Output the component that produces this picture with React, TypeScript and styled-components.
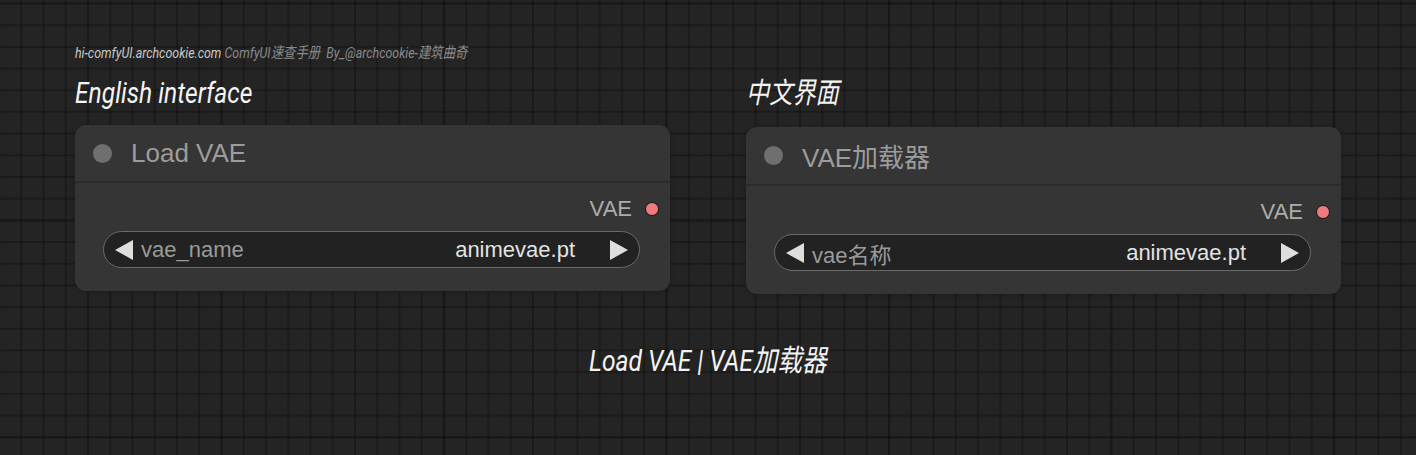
import React from "react";
import styled, { createGlobalStyle } from "styled-components";

const GlobalStyle = createGlobalStyle`
  html, body { margin: 0; padding: 0; background: #222; }
  body { font-family: "Liberation Sans", Arial, sans-serif; }
`;

const Page = styled.div`
  width: 1416px;
  height: 455px;
  overflow: hidden;
  display: flex;
  flex-direction: column;
  background-color: #242424;
  background-image:
    linear-gradient(to right, rgba(0,0,0,0.1) 0 3px, transparent 3px),
    linear-gradient(to bottom, rgba(0,0,0,0.12) 0 3px, transparent 3px),
    linear-gradient(to right, rgba(0,0,0,0.25) 0 2px, transparent 2px),
    linear-gradient(to bottom, rgba(0,0,0,0.25) 0 2px, transparent 2px);
  background-size: 222.5px 217px, 222.5px 217px, 22.25px 21.7px, 22.25px 21.7px;
  background-position: -2.5px 2px, -2.5px 2px, -2px 2.5px, -2px 2.5px;
`;

const Top = styled.div`
  display: flex;
  flex-direction: column;
  padding: 43px 0 0 75px;
`;

const Condensed = styled.span<{ $origin?: string; $scale?: number }>`
  display: inline-block;
  white-space: nowrap;
  font-family: Roboto, "Noto Sans CJK SC", sans-serif;
  font-style: italic;
  transform: scaleX(${(p) => p.$scale ?? 0.8});
  transform-origin: ${(p) => p.$origin ?? "left"} center;
`;

const Credit = styled.div`
  height: 20px;
  line-height: 20px;
  font-size: 15.5px;
  color: #8a8a8a;
`;

const CreditSite = styled.span`
  color: #c9c9c9;
`;

const Columns = styled.div`
  display: flex;
  gap: 76px;
  margin-top: 10px;
`;

const Column = styled.div`
  display: flex;
  flex-direction: column;
  width: 595px;
`;

const Label = styled.div<{ $size?: number }>`
  height: 40px;
  line-height: 40px;
  font-size: ${(p) => p.$size ?? 30}px;
  color: #f4f4f4;
`;

const Node = styled.div<{ $shift?: number }>`
  margin-top: ${(p) => 12 + (p.$shift ?? 0)}px;
  background: #353535;
  border-radius: 11px;
  display: flex;
  flex-direction: column;
  box-shadow: 0 1px 4px rgba(0, 0, 0, 0.25);
`;

const TitleBar = styled.div<{ $h?: number }>`
  height: ${(p) => p.$h ?? 56}px;
  display: flex;
  align-items: center;
  gap: 19px;
  padding-left: 18px;
  border-bottom: 2px solid #2b2b2b;
`;

const StatusDot = styled.span`
  width: 19px;
  height: 19px;
  border-radius: 50%;
  background: #6f6f6f;
`;

const Title = styled.span`
  font-family: "Liberation Sans", "Noto Sans CJK SC", sans-serif;
  font-size: 26px;
  color: #9c9c9c;
`;

const Body = styled.div`
  display: flex;
  flex-direction: column;
  padding: 15px 0 23px;
`;

const OutputRow = styled.div`
  height: 22px;
  display: flex;
  align-items: center;
  justify-content: flex-end;
  gap: 13px;
  padding-right: 11px;
`;

const OutputLabel = styled.span`
  font-size: 22px;
  color: #acacac;
`;

const Socket = styled.span`
  width: 12px;
  height: 12px;
  border-radius: 50%;
  background: #ee7c7c;
  border: 1.5px solid #151515;
`;

const Widget = styled.div`
  margin: 11px 30px 0 28px;
  height: 37px;
  box-sizing: border-box;
  border: 1.5px solid #6a6a6a;
  border-radius: 19px;
  background: #222222;
  display: flex;
  align-items: center;
  padding: 0 11px 0 11px;
`;

const Arrow = styled.span<{ $dir: "left" | "right" }>`
  width: 0;
  height: 0;
  border-top: 10px solid transparent;
  border-bottom: 10px solid transparent;
  ${(p) =>
    p.$dir === "left"
      ? "border-right: 18px solid #dedede;"
      : "border-left: 18px solid #dedede;"}
`;

const WidgetName = styled.span`
  font-family: "Liberation Sans", "Noto Sans CJK SC", sans-serif;
  font-size: 22px;
  color: #9a9a9a;
  margin-left: 8px;
  flex: 1;
`;

const WidgetValue = styled.span`
  font-size: 22px;
  color: #e2e2e2;
  margin-right: 35px;
`;

const Caption = styled.div`
  margin-top: 47px;
  height: 40px;
  line-height: 40px;
  text-align: center;
  font-size: 30px;
  color: #f4f4f4;
`;

type NodeProps = {
  title: string;
  widgetName: string;
  shift?: number;
  titleH?: number;
};

function VaeNode({ title, widgetName, shift, titleH }: NodeProps) {
  return (
    <Node $shift={shift}>
      <TitleBar $h={titleH}>
        <StatusDot />
        <Title>{title}</Title>
      </TitleBar>
      <Body>
        <OutputRow>
          <OutputLabel>VAE</OutputLabel>
          <Socket />
        </OutputRow>
        <Widget>
          <Arrow $dir="left" />
          <WidgetName>{widgetName}</WidgetName>
          <WidgetValue>animevae.pt</WidgetValue>
          <Arrow $dir="right" />
        </Widget>
      </Body>
    </Node>
  );
}

export default function App() {
  return (
    <>
      <GlobalStyle />
      <Page>
        <Top>
          <Credit>
            <Condensed>
              <CreditSite>hi-comfyUI.archcookie.com</CreditSite> ComfyUI速查手册&nbsp; By_@archcookie-建筑曲奇
            </Condensed>
          </Credit>
          <Columns>
            <Column>
              <Label>
                <Condensed $scale={0.82}>English interface</Condensed>
              </Label>
              <VaeNode title="Load VAE" widgetName="vae_name" />
            </Column>
            <Column>
              <Label $size={29}>
                <Condensed $scale={0.8}>中文界面</Condensed>
              </Label>
              <VaeNode title="VAE加载器" widgetName="vae名称" shift={2} titleH={57} />
            </Column>
          </Columns>
        </Top>
        <Caption>
          <Condensed $origin="center" $scale={0.82}>Load VAE | VAE加载器</Condensed>
        </Caption>
      </Page>
    </>
  );
}
